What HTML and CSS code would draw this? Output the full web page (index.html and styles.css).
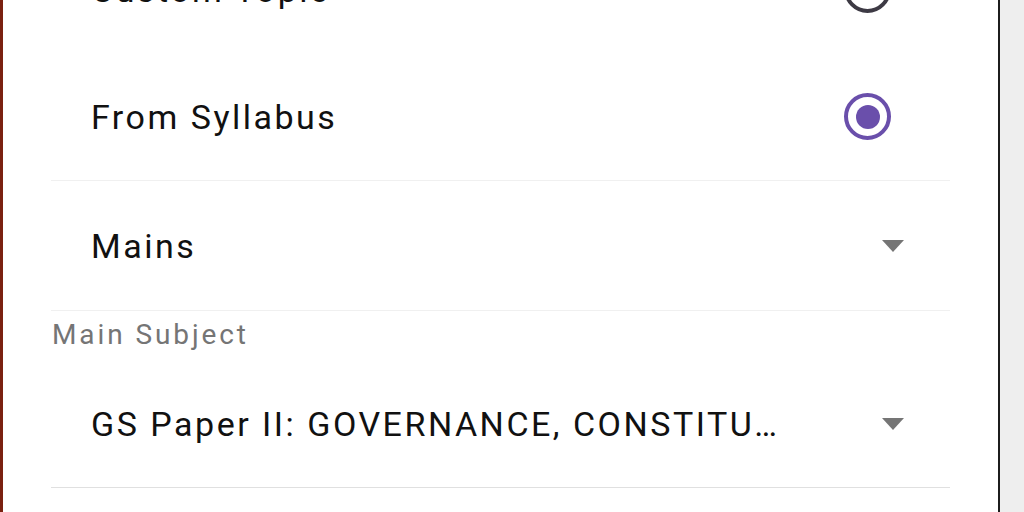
FILE: index.html
```html
<!DOCTYPE html>
<html lang="en">
<head>
    <meta charset="UTF-8">
    <meta name="viewport" content="width=device-width, initial-scale=1.0">
    <title>Question Source</title>
    <link rel="stylesheet" href="styles.css">
</head>
<body>
    <div class="sheet">
        <div class="option-row">
            <span class="option-text">Custom Topic</span>
            <span class="radio"></span>
        </div>
        <div class="option-row divided">
            <span class="option-text">From Syllabus</span>
            <span class="radio selected"></span>
        </div>

        <div class="dropdown-row">
            <span class="dropdown-value">Mains</span>
            <span class="arrow"></span>
        </div>

        <div class="field-label">Main Subject</div>
        <div class="dropdown-row subject">
            <span class="dropdown-value">GS Paper II: GOVERNANCE, CONSTITUTION, POLITY, SOCIAL JUSTICE AND INTERNATIONAL RELATIONS</span>
            <span class="arrow"></span>
        </div>
    </div>
</body>
</html>
```

FILE: styles.css
```css
body {
    margin: 0;
    background-color: #eeeeee;
    font-family: Roboto, "Noto Sans", sans-serif;
    overflow: hidden;
}
.sheet {
    width: 1000px;
    box-sizing: border-box;
    margin-top: -74px;
    height: 600px;
    padding: 0 48px;
    background: white;
    border-left: 3px solid #7a2010;
    border-right: 2px solid #1c1c1c;
}
.option-row {
    display: flex;
    align-items: center;
    justify-content: space-between;
    height: 127px;
    padding: 0 59px 0 40px;
}
.option-row.divided {
    border-bottom: 1px solid #f0f0f0;
}
.option-text,
.dropdown-value {
    font-size: 34px;
    letter-spacing: 2.5px;
    color: #111111;
}
.radio {
    width: 47px;
    height: 47px;
    box-sizing: border-box;
    border-radius: 50%;
    border: 4.5px solid #3d3a44;
    display: flex;
    align-items: center;
    justify-content: center;
}
.radio.selected {
    border-color: #6a4fab;
}
.radio.selected::after {
    content: "";
    width: 24px;
    height: 24px;
    border-radius: 50%;
    background: #6a4fab;
}
.dropdown-row {
    display: flex;
    align-items: center;
    justify-content: space-between;
    height: 129px;
    padding: 0 46px 0 40px;
    border-bottom: 1px solid #f0f0f0;
}
.dropdown-row.subject {
    box-sizing: border-box;
    height: 138px;
    padding-top: 11px;
    border-bottom-color: #e0e0e0;
}
.dropdown-value {
    max-width: 690px;
    white-space: nowrap;
    overflow: hidden;
    text-overflow: ellipsis;
}
.arrow {
    width: 0;
    height: 0;
    border-left: 11.5px solid transparent;
    border-right: 11.5px solid transparent;
    border-top: 12px solid #757575;
}
.field-label {
    margin-top: 7px;
    height: 32px;
    line-height: 34px;
    padding-left: 1px;
    font-size: 28px;
    letter-spacing: 2.9px;
    color: #757575;
}
```
